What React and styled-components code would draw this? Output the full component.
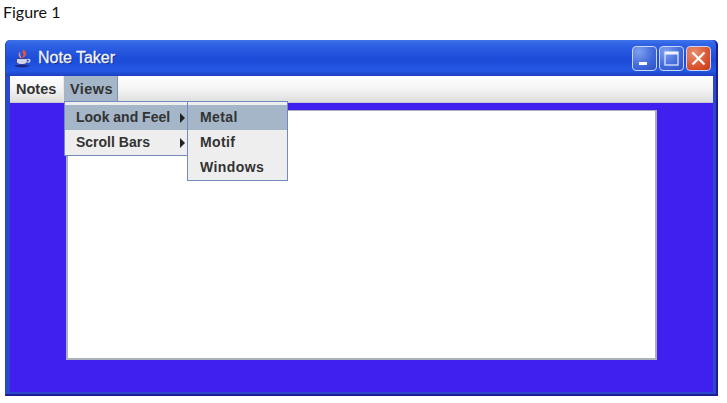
import React from 'react';
import styled, { createGlobalStyle } from 'styled-components';

const Global = createGlobalStyle`
  html, body {
    margin: 0;
    padding: 0;
    background: #fff;
  }
`;

const Page = styled.div`
  width: 727px;
  height: 403px;
  overflow: hidden;
  background: #fff;
`;

const Caption = styled.div`
  height: 40px;
  padding: 3px 0 0 3px;
  box-sizing: border-box;
  font: 16px/18px Lato, "Open Sans", sans-serif;
  color: #111;
`;

const Frame = styled.div`
  width: 713px;
  height: 356px;
  margin-left: 5px;
  box-sizing: border-box;
  border-radius: 5px 5px 0 0;
  display: flex;
  flex-direction: column;
  background: #2a3fc8;
  border-bottom: 2px solid #1c1c94;
  border-right: 2px solid #1c1c94;
  border-left: 1px solid #2447c8;
`;

const TitleBar = styled.div`
  height: 36px;
  flex: none;
  display: flex;
  align-items: center;
  padding: 0 3px 0 6px;
  gap: 4px;
  border-radius: 5px 5px 0 0;
  background: linear-gradient(#3f74ea 0%, #2f62e4 12%, #1c4bd8 55%, #2458e4 85%, #1c3fc4 100%);
`;

const TitleText = styled.span`
  flex: 1;
  font: 16px/18px "Liberation Sans", Arial, sans-serif;
  color: #f4f6ff;
  text-shadow: 1px 1px 0 #12277e;
  -webkit-text-stroke: 0.3px #f4f6ff;
`;

const WinButtons = styled.div`
  display: flex;
  gap: 2px;
  margin-right: 2px;
`;

const WinButton = styled.div`
  width: 25px;
  height: 25px;
  box-sizing: border-box;
  border: 1px solid #c9d6f6;
  border-radius: 4px;
  display: flex;
  background: ${({ $close }) =>
    $close
      ? 'radial-gradient(circle at 30% 25%, #ea8f70, #d8502c 65%, #c43a16)'
      : 'radial-gradient(circle at 25% 20%, #7fa0ee, #3f68da 60%, #2c50c6)'};
`;

const Body = styled.div`
  flex: 1;
  display: flex;
  flex-direction: column;
  padding: 0 3px 2px 4px;
  background: #2c48cc;
`;

const MenuBar = styled.div`
  position: relative;
  height: 27px;
  flex: none;
  display: flex;
  background: linear-gradient(#fefefe 0%, #f6f6f6 45%, #dedede 100%);
  border-bottom: 1px solid #c4c8d0;
  box-sizing: border-box;
`;

const MenuTitle = styled.div`
  width: 54px;
  height: 25px;
  box-sizing: border-box;
  padding-left: 6px;
  font: bold 14.5px/27px "Liberation Sans", Arial, sans-serif;
  letter-spacing: ${({ $open }) => ($open ? '0.4px' : '0')};
  color: #333;
  background: ${({ $open }) => ($open ? '#a4b6c8' : 'transparent')};
  border-right: ${({ $open }) => ($open ? '1px solid #7f93ad' : '1px solid #e8e8e8')};
`;

const Content = styled.div`
  flex: 1;
  background: #4020ee;
  padding: 7px 56px 32px 56px;
  display: flex;
`;

const TextArea = styled.div`
  flex: 1;
  background: #fff;
  border: 2px solid #aab0b8;
  border-top-width: 1px;
`;

const Menu = styled.div`
  position: absolute;
  top: ${({ $top }) => $top}px;
  left: ${({ $left }) => $left}px;
  width: ${({ $width }) => $width}px;
  box-sizing: border-box;
  background: #eeeeee;
  border: 1px solid #7489c0;
  padding-top: 3px;
  z-index: ${({ $z }) => $z};
`;

const MenuItem = styled.div`
  height: 25px;
  box-sizing: border-box;
  display: flex;
  align-items: center;
  justify-content: space-between;
  padding: 0 2px 0 ${({ $indent }) => $indent}px;
  font: bold 14px/25px "Liberation Sans", Arial, sans-serif;
  letter-spacing: ${({ $wide }) => ($wide ? '0.4px' : '0')};
  color: #333;
  background: ${({ $active }) => ($active ? '#a4b6c8' : 'transparent')};
`;

const Arrow = styled.span`
  width: 0;
  height: 0;
  border-left: 5px solid #222;
  border-top: 5px solid transparent;
  border-bottom: 5px solid transparent;
`;

const JavaIcon = () => (
  <svg width="22" height="22" viewBox="0 0 20 20">
    <path d="M10 1c2 2-2 3 0 5 1 1 0 2-1 4 4-1 5-4 3-6-1-1-1-2-2-3z" fill="#e2563a" />
    <path d="M7 5c-1 2 0 3 1 5" stroke="#eb9c84" strokeWidth="1.200" fill="none" />
    <path d="M4 10.500h10v2.500c0 2-2 3-5 3s-5-1-5-3z" fill="#cfd4ee" stroke="#29308c" strokeWidth="0.8" />
    <path d="M14 11.500c3-1 3 2.500 0 2.500" stroke="#d8dcf2" strokeWidth="1.200" fill="none" />
    <path d="M2 16.500h14c-2 2.500-12 2.500-14 0z" fill="#1d2470" />
  </svg>
);

const MinIcon = () => (
  <svg width="23" height="23" viewBox="0 0 23 23">
    <rect x="6" y="15" width="8" height="3" fill="#fff" />
  </svg>
);

const MaxIcon = () => (
  <svg width="23" height="23" viewBox="0 0 23 23">
    <rect x="5" y="5" width="13" height="13" fill="none" stroke="#cfdcfa" strokeWidth="1.400" />
    <rect x="5" y="5" width="13" height="2.500" fill="#eef3ff" />
  </svg>
);

const CloseIcon = () => (
  <svg width="23" height="23" viewBox="0 0 23 23">
    <path d="M5.500 5.500l12 12M17.500 5.500l-12 12" stroke="#fff" strokeWidth="2.200" />
  </svg>
);

export default function App() {
  return (
    <Page>
      <Global />
      <Caption>Figure 1</Caption>
      <Frame>
        <TitleBar>
          <JavaIcon />
          <TitleText>Note Taker</TitleText>
          <WinButtons>
            <WinButton><MinIcon /></WinButton>
            <WinButton><MaxIcon /></WinButton>
            <WinButton $close><CloseIcon /></WinButton>
          </WinButtons>
        </TitleBar>
        <Body>
          <MenuBar>
            <MenuTitle>Notes</MenuTitle>
            <MenuTitle $open>Views</MenuTitle>
            <Menu $top={25} $left={54} $width={124} $z={1}>
              <MenuItem $active $indent={11}>Look and Feel<Arrow /></MenuItem>
              <MenuItem $indent={11}>Scroll Bars<Arrow /></MenuItem>
            </Menu>
            <Menu $top={25} $left={177} $width={101} $z={2}>
              <MenuItem $active $wide $indent={12}>Metal</MenuItem>
              <MenuItem $wide $indent={12}>Motif</MenuItem>
              <MenuItem $wide $indent={12}>Windows</MenuItem>
            </Menu>
          </MenuBar>
          <Content>
            <TextArea />
          </Content>
        </Body>
      </Frame>
    </Page>
  );
}
